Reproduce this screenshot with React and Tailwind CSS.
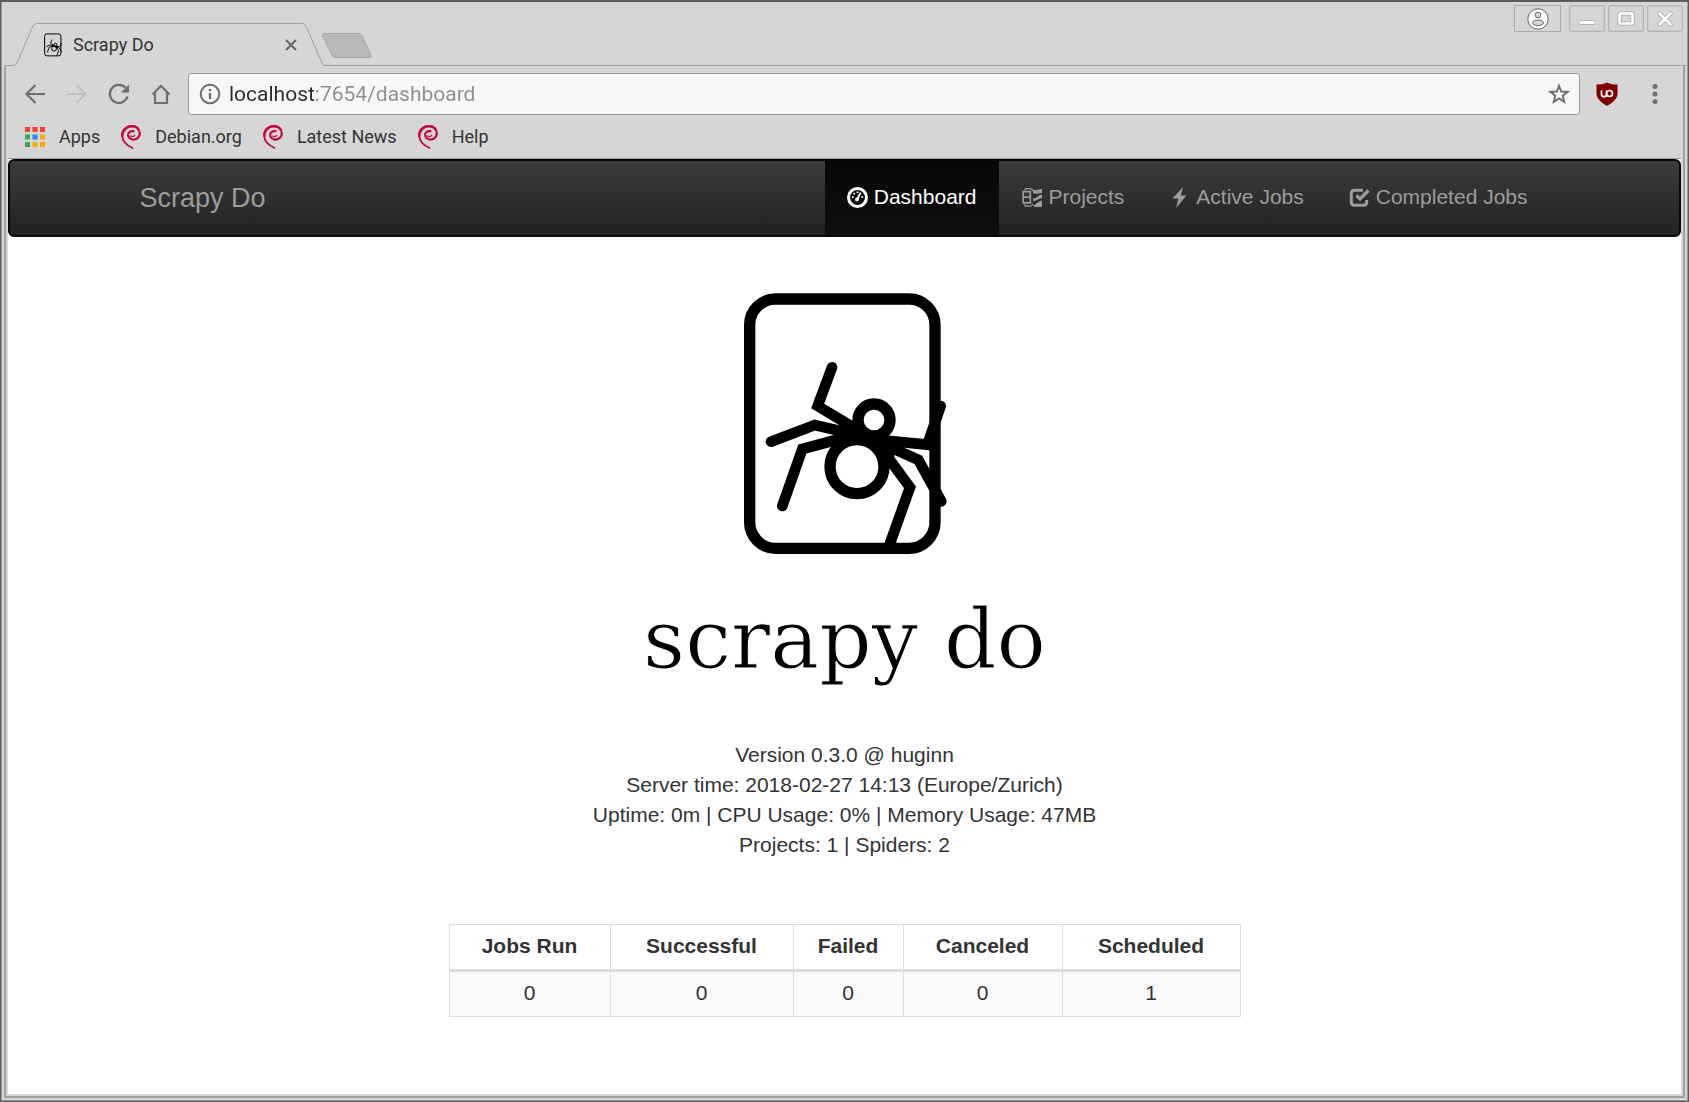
import React from "react";

function SpiderMark({ className, frame = 34, leg = 32 }) {
  return (
    <svg viewBox="0 0 750 870" className={className} fill="none" stroke="#000" aria-hidden="true">
      <rect x="89" y="57" width="556" height="748" rx="78" strokeWidth={frame} />
      <g strokeWidth={leg} strokeLinecap="round">
        <path d="M336 262 293 378 410 448" />
        <path d="M153 485 284 435 400 462" />
        <path d="M187 678 247 507 370 474" />
        <path d="M480 480 622 494 662 378" />
        <path d="M480 488 595 540 664 664" />
        <path d="M480 500 570 622 510 790" />
      </g>
      <circle cx="462" cy="420" r="48" strokeWidth={frame} />
      <circle cx="411" cy="560" r="81" strokeWidth={frame} />
      <path d="M350 462 395 430 425 452 460 470 505 465 530 485 522 535 505 560 480 520 440 490 385 488 335 508Z" fill="#000" stroke="none" />
    </svg>
  );
}

function DebianSwirl() {
  return (
    <svg viewBox="0 0 22 26" className="h-[26px] w-[22px]" fill="none" stroke="#c40a3c" strokeLinecap="round" aria-hidden="true">
      <path strokeWidth="1.800" d="M12.500 24C7 21.500 2.300 17.500 2.200 11.500 2.100 5.500 6.500 1.900 11.500 1.900 16 1.900 19.800 5 19.800 9.500" />
      <path strokeWidth="2.200" d="M19.800 9C20 13 17 15.600 13.800 15.600 10.500 15.600 8 13.300 8.100 10.700 8.200 8.300 10.500 6.600 13.500 7.200" />
      <path strokeWidth="2.400" d="M2.300 12C2.300 6 7 2.100 12 2.200 15 2.300 17.800 3.800 18.800 6" />
      <path strokeWidth="1.200" d="M10.800 12C12 13 14.200 12.600 14.800 11.200" />
    </svg>
  );
}

function Tab() {
  return (
    <div className="relative h-[43px] w-[320px] shrink-0">
      <svg viewBox="0 0 320 43" className="absolute inset-0 h-full w-full" fill="#d6d6d6" stroke="#a0a0a0" aria-hidden="true">
        <path d="M0 42.500H8Q11 42.500 12 40L28 3Q29.500.5 32 .5H297Q300 .5 301 3L317 40Q318 42.500 320 42.500" />
      </svg>
      <div className="relative flex h-full items-center pr-[26px] pl-[37px]">
        <SpiderMark className="h-[26px] w-[22px]" frame={34} leg={30} />
        <span className="ml-[9px] flex-1 text-[18px] leading-6">Scrapy Do</span>
        <button type="button" aria-label="Close tab" className="flex size-4 items-center justify-center">
          <svg viewBox="0 0 12 12" className="size-3" stroke="#666" strokeWidth="2" aria-hidden="true">
            <path d="M1 1 11 11M11 1 1 11" />
          </svg>
        </button>
      </div>
    </div>
  );
}

function WindowButton({ label, wide, children }) {
  return (
    <button
      type="button"
      aria-label={label}
      className={
        wide
          ? "mr-[5px] flex h-[27px] w-[47px] items-center justify-center border border-[#acacac]"
          : "flex h-[27px] w-9 items-center justify-center rounded-[2px] border border-[#b4b4b4] shadow-[inset_0_0_0_1px_#cbcbcb]"
      }
    >
      {children}
    </button>
  );
}

function TitleBar() {
  return (
    <div className="flex h-16 items-end pl-[3px]">
      <Tab />
      <div className="flex h-full flex-1 items-start justify-between border-b border-[#a0a0a0]">
        <button type="button" aria-label="New tab" className="mt-[31px] -ml-1">
          <svg viewBox="0 0 52 26" className="h-[26px] w-[52px]" aria-hidden="true">
            <path d="M3 .5H38Q40 .5 41 2.500L50 22Q51 24.500 49 24.500H14Q12 24.500 11 22.500L1.500 3Q.5.5 3 .5Z" fill="#b8b8b8" stroke="#a9a9a9" />
          </svg>
        </button>
        <div className="mt-[3px] mr-1 flex gap-[3px]">
          <WindowButton label="Profile" wide>
            <svg viewBox="0 0 22 22" className="size-[22px]" fill="#fff" stroke="#666" aria-hidden="true">
              <circle cx="11" cy="11" r="10.200" />
              <circle cx="11" cy="7" r="2.800" fill="#d6d6d6" />
              <ellipse cx="11" cy="14.800" rx="5.500" ry="2.800" fill="#d6d6d6" />
            </svg>
          </WindowButton>
          <WindowButton label="Minimize">
            <svg viewBox="0 0 18 16" className="h-4 w-[18px]" aria-hidden="true">
              <rect x="1" y="9.500" width="16" height="4" rx="1" fill="#fff" stroke="#b4b4b4" />
            </svg>
          </WindowButton>
          <WindowButton label="Maximize">
            <svg viewBox="0 0 18 16" className="h-4 w-[18px]" fill="none" aria-hidden="true">
              <rect x="2.500" y="2.500" width="13" height="10" rx="1" stroke="#b4b4b4" strokeWidth="4.500" />
              <rect x="2.500" y="2.500" width="13" height="10" rx="1" stroke="#fff" strokeWidth="2.500" />
            </svg>
          </WindowButton>
          <WindowButton label="Close">
            <svg viewBox="0 0 18 16" className="h-4 w-[18px]" strokeLinecap="round" aria-hidden="true">
              <path d="M3.500 2.500 14.500 13.500M14.500 2.500 3.500 13.500" stroke="#b0b0b0" strokeWidth="4.500" />
              <path d="M3.500 2.500 14.500 13.500M14.500 2.500 3.500 13.500" stroke="#fff" strokeWidth="2.500" />
            </svg>
          </WindowButton>
        </div>
      </div>
    </div>
  );
}

function ToolButton({ label, color, children }) {
  return (
    <button type="button" aria-label={label} className="flex size-6 items-center justify-center">
      <svg viewBox="0 0 24 24" className="size-6" fill="none" stroke={color} strokeWidth="2.200" aria-hidden="true">
        {children}
      </svg>
    </button>
  );
}

function Toolbar() {
  return (
    <div className="flex items-center pt-[7px] pr-[14px] pl-[15px]">
      <div className="flex gap-[18px]">
        <ToolButton label="Back" color="#6e6e6e">
          <path d="M22 12H4M12.500 3 3.500 12 12.500 21" />
        </ToolButton>
        <ToolButton label="Forward" color="#c0c0c0">
          <path d="M2 12H20M11.500 3 20.500 12 11.500 21" />
        </ToolButton>
        <ToolButton label="Reload" color="#6e6e6e">
          <path d="M20.500 14.500A9 9 0 1 1 18.500 5.800" />
          <path d="M22 2.500V10.500H14Z" fill="#6e6e6e" stroke="none" />
        </ToolButton>
        <ToolButton label="Home" color="#6e6e6e">
          <path d="M3.500 12.500 12 3.800 20.500 12.500M6 11V21H18V11" />
        </ToolButton>
      </div>
      <div className="ml-[15px] flex h-[42px] flex-1 items-center rounded-[3px] border border-[#9a9a9a] bg-[#f7f7f7] pr-[9px] pl-[10px]">
        <svg viewBox="0 0 22 22" className="size-[22px]" fill="none" stroke="#6e6e6e" strokeWidth="2" aria-hidden="true">
          <circle cx="11" cy="11" r="9.300" />
          <path d="M11 10V16M11 6V8.200" strokeWidth="2.400" />
        </svg>
        <input
          type="text"
          aria-label="Address"
          defaultValue="localhost:7654/dashboard"
          className="ml-2 h-8 min-w-0 flex-1 bg-[linear-gradient(90deg,#2b2b2b_85px,#8e8e8e_85px)] bg-clip-text text-[21px] text-transparent outline-none"
        />
        <button type="button" aria-label="Bookmark this page">
          <svg viewBox="0 0 22 22" className="size-[22px]" fill="none" stroke="#6e6e6e" strokeWidth="1.900" aria-hidden="true">
            <path d="M11 2.900 13.200 8.500 19.500 8.900 14.700 12.700 16.300 18.900 11 15.500 5.700 18.900 7.300 12.700 2.500 8.900 8.800 8.500Z" />
          </svg>
        </button>
      </div>
      <button type="button" aria-label="uBlock Origin" className="ml-[15px]">
        <svg viewBox="0 0 24 24" className="size-6" aria-hidden="true">
          <path d="M12 .5C15 2.300 19 2.500 22.500 2.500V11C22.500 17 17.500 21 12 23.800 6.500 21 1.500 17 1.500 11V2.500C5 2.500 9 2.300 12 .5Z" fill="#800000" />
          <path d="M6.500 8.500V12.200A2.500 2.500 0 0 0 11.500 12.200V8.500" fill="none" stroke="#fff" strokeWidth="1.700" />
          <circle cx="14.500" cy="11.500" r="3" fill="none" stroke="#fff" strokeWidth="1.700" />
        </svg>
      </button>
      <button type="button" aria-label="Menu" className="ml-6">
        <svg viewBox="0 0 24 24" className="size-6" fill="#6e6e6e" aria-hidden="true">
          <circle cx="12" cy="4.500" r="2.500" />
          <circle cx="12" cy="12" r="2.500" />
          <circle cx="12" cy="19.500" r="2.500" />
        </svg>
      </button>
    </div>
  );
}

const APP_DOTS = ["#f44336", "#f44336", "#f44336", "#34a853", "#1e88ff", "#f9ab00", "#34a853", "#f9ab00", "#f9ab00"];

function Bookmarks() {
  return (
    <nav aria-label="Bookmarks" className="flex h-[44px] items-center gap-[20px] border-b border-[#9c9c9c] pl-[17px] text-[18px]">
      <a href="#apps" className="flex items-center gap-[14px]">
        <svg viewBox="0 0 20 20" className="size-5" aria-hidden="true">
          {APP_DOTS.map((fill, i) => (
            <rect key={i} x={(i % 3) * 7.5} y={Math.floor(i / 3) * 7.5} width="5" height="5" fill={fill} />
          ))}
        </svg>
        Apps
      </a>
      {["Debian.org", "Latest News", "Help"].map((name) => (
        <a key={name} href="#bookmark" className="flex items-center gap-[13px]">
          <DebianSwirl />
          {name}
        </a>
      ))}
    </nav>
  );
}

const NAV = [
  {
    name: "Dashboard",
    active: true,
    icon: (
      <>
        <circle cx="10.500" cy="10.500" r="9" fill="none" stroke="currentColor" strokeWidth="3" />
        <circle cx="5.800" cy="10" r="1" />
        <circle cx="7.200" cy="6.700" r="1" />
        <circle cx="10.500" cy="5.200" r="1" />
        <circle cx="15.200" cy="10" r="1" />
        <circle cx="10" cy="12.500" r="1.900" />
        <path d="M9.300 11.500 12.800 5.200 14.300 5.800 11.400 12.800Z" />
      </>
    ),
  },
  {
    name: "Projects",
    icon: (
      <>
        <path d="M2.500 3Q3 1.700 4.500 1.700H8Q9.500 1.700 11 3.500M2.500 17.500Q3 19.200 4.500 19.200H8Q10 19 11 17" fill="none" stroke="currentColor" strokeWidth="1.300" />
        <path d="M1.200 4.700H8.300V15.800H1.200ZM1.200 10.200H8.300" fill="none" stroke="currentColor" strokeWidth="1.700" />
        <path d="M11 2.500C14 4.500 16 1.500 20 2V6C16 5.500 14 8 11 6ZM11 11.500C14 12 16 8 20 7.500V11C16 11.500 14 14.500 11 14ZM11 18.500C14 18 16 14 20 13.500V20H13Z" />
      </>
    ),
  },
  { name: "Active Jobs", icon: <path d="M14 0 3.500 11.500H9.500L7 21 17.500 8.500H11.800Z" /> },
  {
    name: "Completed Jobs",
    icon: (
      <g fill="none" stroke="currentColor">
        <path d="M14 3.300H5.500Q2.300 3.300 2.300 6.500V15Q2.300 18.200 5.500 18.200H14.500Q17.700 18.200 17.700 15V13" strokeWidth="3" />
        <path d="M7.500 8.500 11 12 19.500 3.500" strokeWidth="3.200" />
      </g>
    ),
  },
];

function Navbar() {
  return (
    <header className="rounded-[6px] border-2 border-[#080808] bg-linear-to-b from-[#3c3c3c] to-[#222] px-6 text-[21px] text-[#9d9d9d]">
      <div className="mx-auto flex max-w-[1410px] items-center justify-between">
        <a href="#home" className="text-[27px] leading-[30px]">Scrapy Do</a>
        <nav aria-label="Main" className="flex gap-px">
          {NAV.map((item) => (
            <a
              key={item.name}
              href="#section"
              aria-current={item.active ? "page" : undefined}
              className={
                item.active
                  ? "flex h-[74px] items-center gap-[6px] bg-linear-to-b from-[#080808] to-[#0f0f0f] px-[22px] pb-[2px] text-white"
                  : "flex h-[74px] items-center gap-[6px] px-[22px] pb-[2px]"
              }
            >
              <svg viewBox="0 0 21 21" className="size-[21px]" fill="currentColor" aria-hidden="true">
                {item.icon}
              </svg>
              {item.name}
            </a>
          ))}
        </nav>
      </div>
    </header>
  );
}

const STATS = [
  { label: "Jobs Run", value: 0, width: "w-[161px]" },
  { label: "Successful", value: 0, width: "w-[183px]" },
  { label: "Failed", value: 0, width: "w-[110px]" },
  { label: "Canceled", value: 0, width: "w-[159px]" },
  { label: "Scheduled", value: 1, width: "w-[178px]" },
];

function Dashboard() {
  return (
    <main className="flex flex-col items-center px-6 pt-[43px] text-[21px] leading-[30px] text-[#333]">
      <SpiderMark className="h-[290px] w-[250px]" />
      <h1 className="mt-[10px] font-['DejaVu_Serif',serif] text-[82px] leading-[120px] whitespace-nowrap text-black [-webkit-text-stroke:1px_white]">scrapy do</h1>
      <div className="mt-[40px] text-center">
        <p>Version 0.3.0 @ huginn</p>
        <p>Server time: 2018-02-27 14:13 (Europe/Zurich)</p>
        <p>Uptime: 0m | CPU Usage: 0% | Memory Usage: 47MB</p>
        <p>Projects: 1 | Spiders: 2</p>
      </div>
      <table className="mt-16 w-[792px] max-w-full table-fixed border-collapse border border-[#ddd] text-center">
        <thead>
          <tr>
            {STATS.map((s) => (
              <th key={s.label} scope="col" className={`${s.width} h-[46px] border border-b-3 border-[#ddd] pb-[2px] font-bold`}>
                {s.label}
              </th>
            ))}
          </tr>
        </thead>
        <tbody>
          <tr className="bg-[#f9f9f9]">
            {STATS.map((s) => (
              <td key={s.label} className="h-[46px] border border-[#ddd] pb-[2px]">
                {s.value}
              </td>
            ))}
          </tr>
        </tbody>
      </table>
    </main>
  );
}

export default function App() {
  return (
    <div className="flex min-h-screen flex-col border border-t-2 border-[#5c5c5c] bg-[#d6d6d6] font-[Roboto,sans-serif] text-[#333]">
      <div className="flex flex-1 flex-col border-x border-b border-[#9a9a9a]">
        <TitleBar />
        <div className="mx-[2px] mb-[2px] flex flex-1 flex-col border-x-2 border-b-2 border-[#a2a2a2] px-[2px] pb-[2px]">
          <Toolbar />
          <Bookmarks />
          <div className="flex-1 bg-white font-['Liberation_Sans',Arial,sans-serif]">
            <Navbar />
            <Dashboard />
          </div>
        </div>
      </div>
    </div>
  );
}
